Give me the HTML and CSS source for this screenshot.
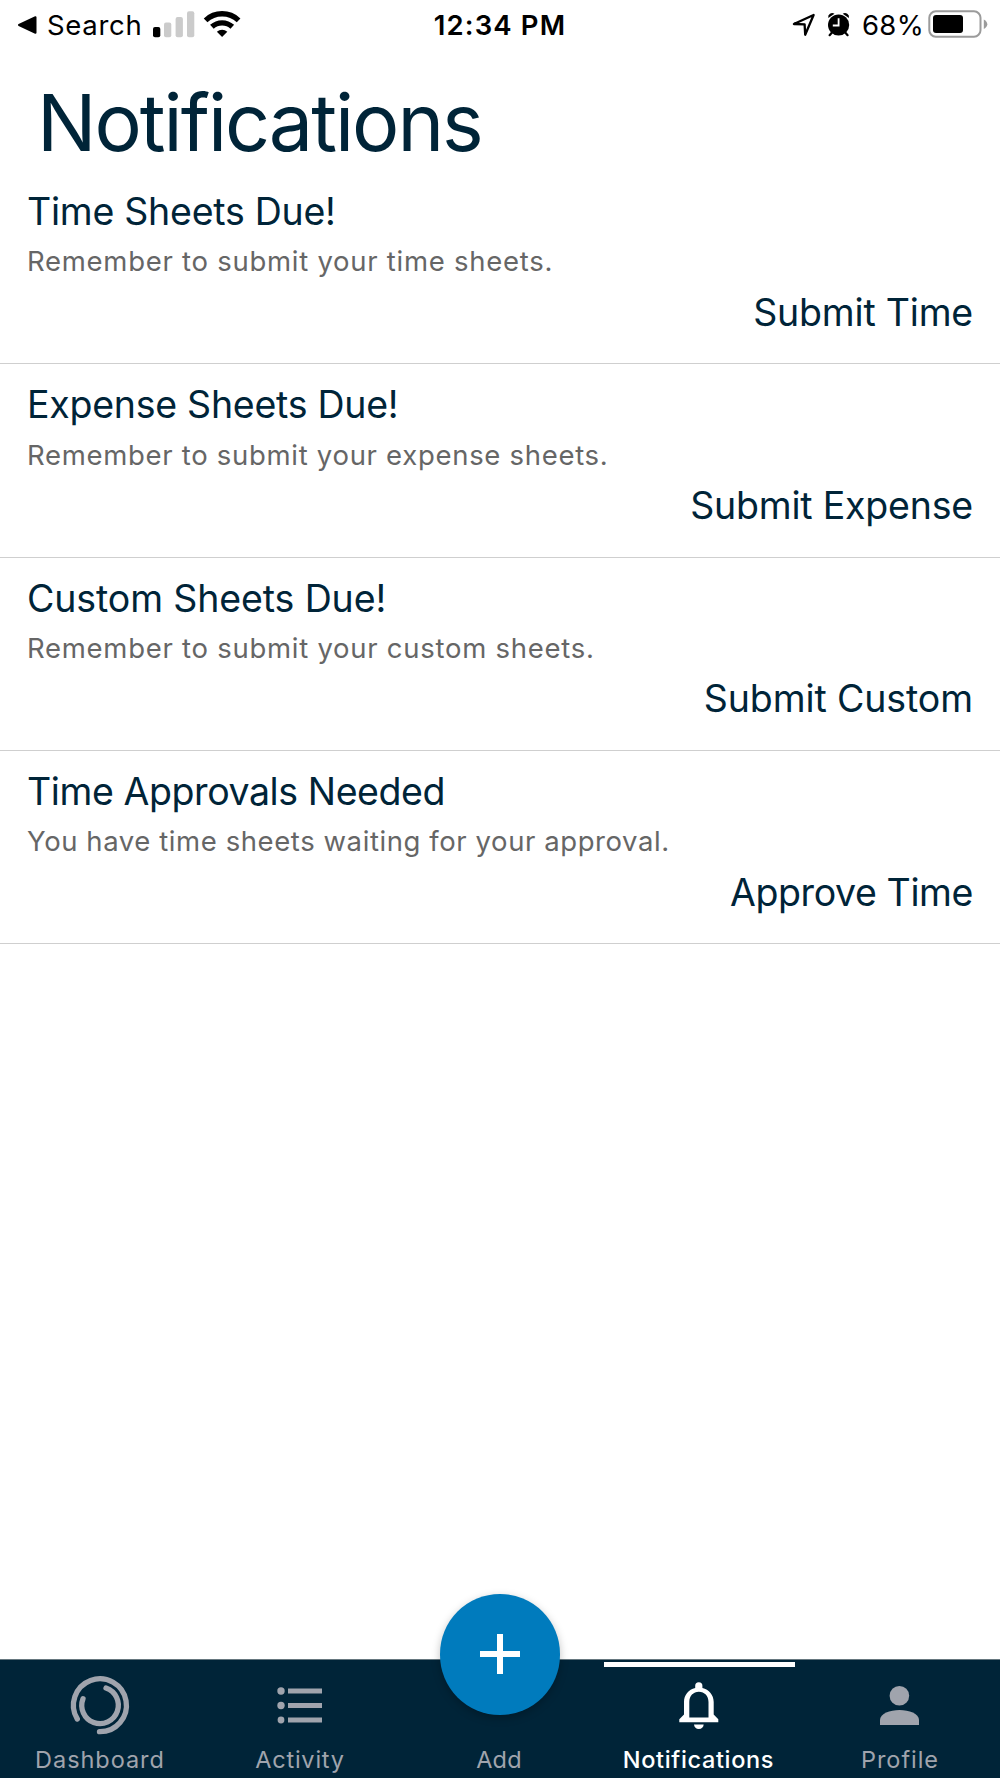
FILE: index.html
```html
<!DOCTYPE html>
<html lang="en">
<head>
<meta charset="utf-8">
<title>Notifications</title>
<link rel="stylesheet" href="styles.css">
</head>
<body>
<div class="app">
  <div class="status">
    <div class="status-left">
      <svg width="20" height="50" viewBox="0 0 20 50"><path d="M1 25 17.5 17.2V32.8Z" stroke="#000" stroke-width="2" stroke-linejoin="round"/></svg>
      <span class="search">Search</span>
      <svg class="signal" width="96" height="50" viewBox="150 0 96 50">
        <rect x="153" y="27" width="7.3" height="10.2" rx="2"/>
        <g fill="#cbcbcb"><rect x="164" y="22.6" width="7.3" height="14.6" rx="2"/><rect x="175.6" y="17" width="7.3" height="20.2" rx="2"/><rect x="187" y="11.3" width="7.3" height="25.9" rx="2"/></g>
        <g fill="none" stroke="#000" stroke-width="5.3"><path d="M205.6 20.3A24 24 0 0 1 238.6 20.3"/><path d="M211.9 26.8A15 15 0 0 1 232.3 26.8"/></g>
        <path d="M216.9 31.8A7.6 7.6 0 0 1 227.3 31.8L222.1 37Z"/>
      </svg>
    </div>
    <span class="clock">12:34 PM</span>
    <div class="status-right">
      <svg width="60" height="50" viewBox="792 0 60 50">
        <path d="M793.9 24 813.6 15 805.2 34.8 804.6 24.3Z" fill="none" stroke="#000" stroke-width="2.3" stroke-linejoin="round"/>
        <circle cx="838.6" cy="25" r="10.6"/>
        <path d="M828.3 18a4 4 0 0 1 6.2-4.2M848.9 18a4 4 0 0 0-6.2-4.2Z"/>
        <path d="M832 32.5 829.6 35.2M845.2 32.5 847.6 35.2" stroke="#000" stroke-width="2.2" stroke-linecap="round"/>
        <path d="M838.6 18.2V25.5H832.8" fill="none" stroke="#fff" stroke-width="1.8"/>
      </svg>
      <span class="percent">68%</span>
      <svg width="62" height="50" viewBox="927 0 62 50">
        <rect x="929.3" y="11.3" width="51.2" height="25.4" rx="6.5" fill="none" stroke="#9b9b9b" stroke-width="2"/>
        <rect x="933" y="15" width="30" height="18" rx="3"/>
        <path d="M983.8 19.5Q987.3 21.5 987.3 24.2T983.8 29Z" fill="#9b9b9b"/>
      </svg>
    </div>
  </div>

  <h1 class="title">Notifications</h1>

  <div class="list">
    <div class="item time">
      <div class="name">Time Sheets Due!</div>
      <div class="desc">Remember to submit your time sheets.</div>
      <div class="action">Submit Time</div>
    </div>
    <div class="item expense">
      <div class="name">Expense Sheets Due!</div>
      <div class="desc">Remember to submit your expense sheets.</div>
      <div class="action">Submit Expense</div>
    </div>
    <div class="item custom">
      <div class="name">Custom Sheets Due!</div>
      <div class="desc">Remember to submit your custom sheets.</div>
      <div class="action">Submit Custom</div>
    </div>
    <div class="item approvals">
      <div class="name">Time Approvals Needed</div>
      <div class="desc">You have time sheets waiting for your approval.</div>
      <div class="action">Approve Time</div>
    </div>
  </div>

  <nav class="nav">
    <div class="tab dashboard">
      <svg width="200" height="86" viewBox="0 0 200 86" fill="none" stroke="currentColor" stroke-width="5.3" stroke-linecap="round">
        <path d="M77.3 59A26.5 26.5 0 1 1 99.5 71.7"/><path d="M83 38.7A18.3 18.3 0 1 0 106 28"/>
      </svg>
      <span>Dashboard</span>
    </div>
    <div class="tab activity">
      <svg width="200" height="86" viewBox="0 0 200 86" fill="currentColor">
        <circle cx="81" cy="31" r="3.7"/><circle cx="81" cy="45.5" r="3.7"/><circle cx="81" cy="60" r="3.4"/>
        <path d="M88 28.6h34v5H88zM88 43h34v5H88zM88 57.5h34v5H88z"/>
      </svg>
      <span>Activity</span>
    </div>
    <div class="tab add">
      <div class="slot"></div>
      <span>Add</span>
      <div class="fab"><svg width="40" height="40" viewBox="0 0 40 40"><path d="M0 20H40M20 0V40" stroke="#fff" stroke-width="6"/></svg></div>
    </div>
    <div class="tab alerts active">
      <svg width="200" height="86" viewBox="0 0 200 86" fill="currentColor">
        <path fill-rule="evenodd" d="M95.2 28V25.8a3.6 3.6 0 0 1 7.2 0V28C109 29.5 113.7 35 113.7 42V54.5L118.3 59.3V62.3H79.3V59.3L84 54.5V42C84 35 88.6 29.5 95.2 28ZM89.3 57.5H108.5V42C108.5 36 104.5 31.8 98.9 31.8S89.3 36 89.3 42Z"/>
        <path d="M94 64.6H103.7A4.9 5.2 0 0 1 94 64.6Z"/>
      </svg>
      <span>Notifications</span>
    </div>
    <div class="tab profile">
      <svg width="200" height="86" viewBox="0 0 200 86" fill="currentColor">
        <circle cx="99.4" cy="35.8" r="9.8"/>
        <path d="M80 65V60C80 53.5 90 50 99.5 50S119 53.5 119 60V65Z"/>
      </svg>
      <span>Profile</span>
    </div>
  </nav>
</div>
</body>
</html>
```

FILE: styles.css
```css
* { box-sizing: border-box; }
body { margin: 0; background: #fff; font-family: Inter, "Liberation Sans", sans-serif; color: #002438; }
svg { display: block; flex: none; }
.app { width: 1000px; height: 1778px; display: flex; flex-direction: column; overflow: hidden; }

.status { height: 50px; display: grid; grid-template-columns: 1fr auto 1fr; padding: 0 11px 0 18px; color: #000; font-size: 27.5px; line-height: 51px; white-space: nowrap; }
.status-left, .status-right { display: flex; }
.status-right { justify-content: flex-end; }
.search { width: 102px; margin-left: 9px; letter-spacing: .7px; }
.signal { margin-left: 1px; }
.clock { font-weight: 600; letter-spacing: 1.15px; margin-right: 7px; }
.percent { width: 65px; margin-left: 10px; letter-spacing: .3px; }

.title { margin: 0; padding: 23.5px 0 0 37px; height: 121px; font-size: 79px; line-height: 96px; font-weight: 400; letter-spacing: -2.04px; font-variant-ligatures: none; }

.list { flex: 1; }
.item { height: 193.33px; padding: 19px 27px 0 27px; border-bottom: 1px solid #cfcfcf; white-space: nowrap; }
.name, .action { font-size: 37.5px; line-height: 44px; }
.desc { margin: 8.2px 0 10.4px; font-size: 27.5px; line-height: 38px; letter-spacing: .73px; color: #666; }
.action { text-align: right; letter-spacing: -.2px; }
.time .name { letter-spacing: -.25px; }
.expense .name { letter-spacing: -.26px; }
.expense .desc { letter-spacing: .7px; }
.custom .name { letter-spacing: -.12px; }
.custom .action { letter-spacing: -.1px; }
.approvals .name { letter-spacing: -.41px; }
.approvals .desc { letter-spacing: .58px; }
.approvals .action { letter-spacing: -.4px; }

.nav { position: relative; height: 119px; display: grid; grid-template-columns: repeat(5, 200px); background: #002438; border-top: 1px solid #66777f; color: #a0a4ad; }
.tab { position: relative; display: flex; flex-direction: column; align-items: center; font-size: 23.5px; line-height: 28px; letter-spacing: .95px; }
.slot { height: 86px; }
.activity { letter-spacing: .8px; }
.add { letter-spacing: .2px; }
.add span { margin-right: 2px; }
.alerts { letter-spacing: .65px; font-weight: 500; }
.alerts span { margin-right: 3px; }
.active { color: #fff; }
.active::before { content: ""; position: absolute; top: 1.7px; left: 3.7px; width: 191.3px; height: 5px; background: #fff; }
.fab { position: absolute; left: 39.7px; top: -66px; width: 120.6px; height: 120.6px; border-radius: 50%; background: #007bbd; display: flex; align-items: center; justify-content: center; box-shadow: 0 3px 8px rgba(0, 0, 0, .25); }
```
